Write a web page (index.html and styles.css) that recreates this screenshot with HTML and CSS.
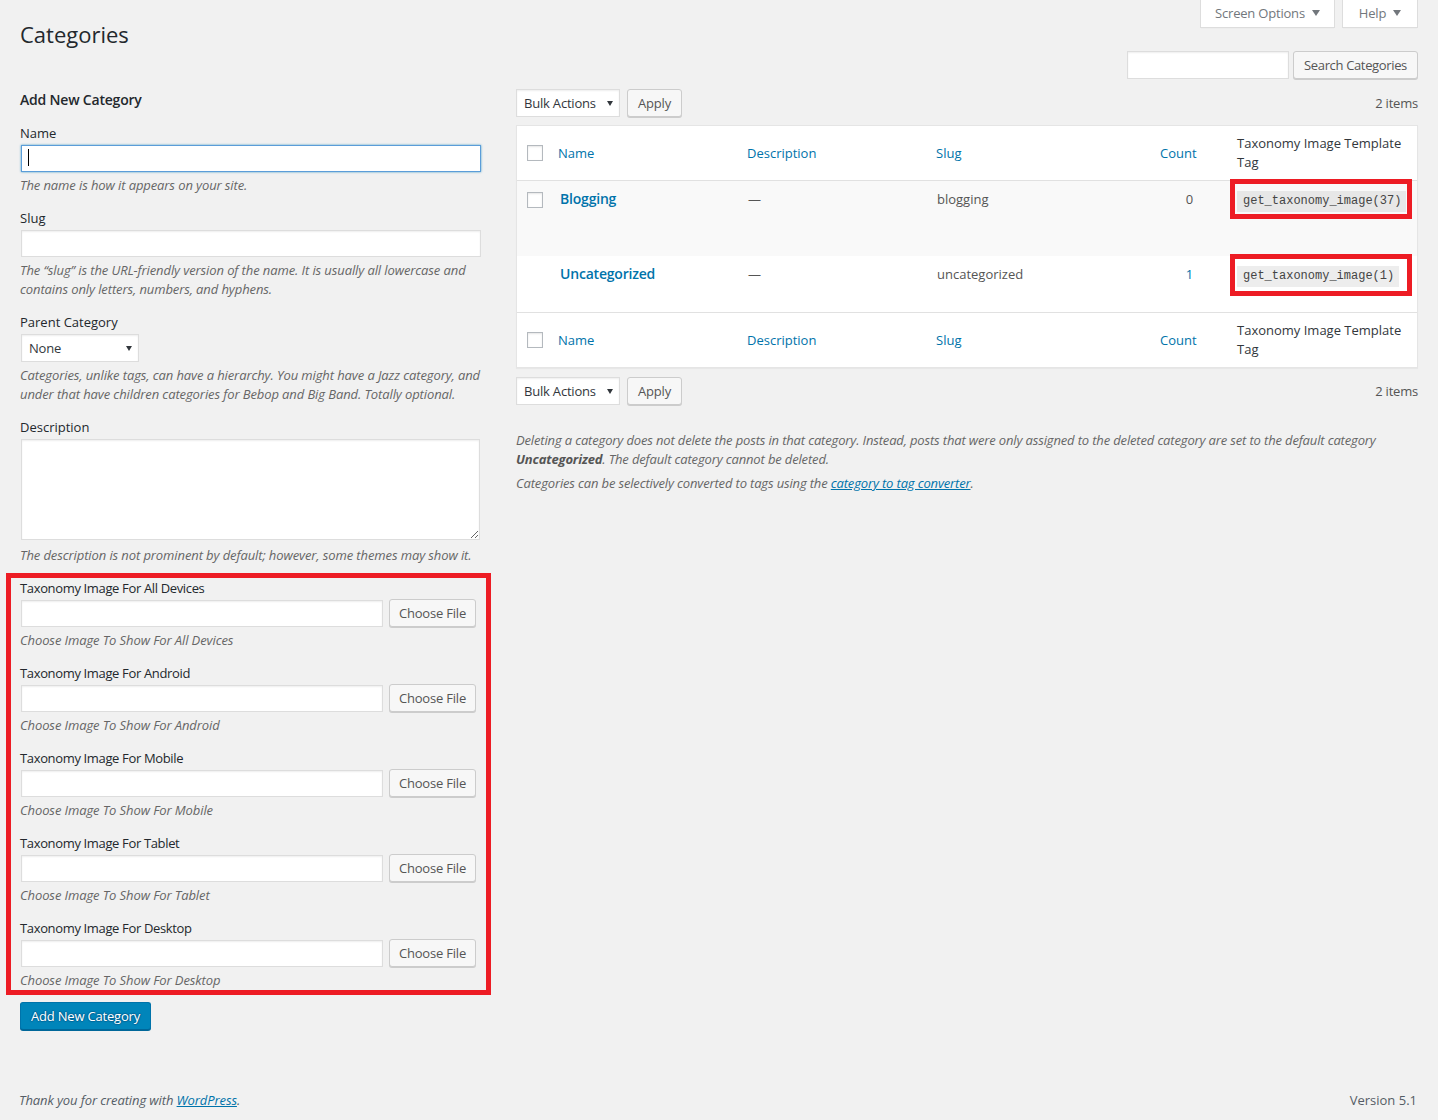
FILE: index.html
```html
<!DOCTYPE html>
<html lang="en">
<head>
<meta charset="utf-8">
<title>Categories</title>
<link rel="stylesheet" href="styles.css">
</head>
<body>
<div class="page">
  <div class="main">
    <div class="screen-meta-links">
      <button class="meta-tab tab-screen">Screen Options <span class="tri-grey"></span></button>
      <button class="meta-tab tab-help">Help <span class="tri-grey"></span></button>
    </div>
    <h1 class="page-title">Categories</h1>
    <div class="search-box">
      <input class="input search-input" type="search">
      <button class="button btn-search">Search Categories</button>
    </div>

    <div class="cols">
      <div class="col-left">
        <h2 class="form-title">Add New Category</h2>

        <div class="form-field">
          <label class="field-label">Name</label>
          <div class="name-wrap"><input class="input text-input focused" type="text"></div>
          <p class="description">The name is how it appears on your site.</p>
        </div>

        <div class="form-field">
          <label class="field-label">Slug</label>
          <input class="input text-input" type="text">
          <p class="description">The “slug” is the URL-friendly version of the name. It is usually all lowercase and contains only letters, numbers, and hyphens.</p>
        </div>

        <div class="form-field">
          <label class="field-label">Parent Category</label>
          <span class="select-wrap sel-parent"><select class="select"><option>None</option></select></span>
          <p class="description">Categories, unlike tags, can have a hierarchy. You might have a Jazz category, and under that have children categories for Bebop and Big Band. Totally optional.</p>
        </div>

        <div class="form-field field-desc">
          <label class="field-label">Description</label>
          <textarea class="input textarea"></textarea>
          <p class="description desc-after-area">The description is not prominent by default; however, some themes may show it.</p>
        </div>

        <div class="tax-box">
          <div class="tax-field">
            <label class="field-label tax-label">Taxonomy Image For All Devices</label>
            <div class="file-row"><input class="input file-input" type="text"><button class="button btn-choose">Choose File</button></div>
            <p class="description">Choose Image To Show For All Devices</p>
          </div>
          <div class="tax-field">
            <label class="field-label tax-label">Taxonomy Image For Android</label>
            <div class="file-row"><input class="input file-input" type="text"><button class="button btn-choose">Choose File</button></div>
            <p class="description">Choose Image To Show For Android</p>
          </div>
          <div class="tax-field">
            <label class="field-label tax-label">Taxonomy Image For Mobile</label>
            <div class="file-row"><input class="input file-input" type="text"><button class="button btn-choose">Choose File</button></div>
            <p class="description">Choose Image To Show For Mobile</p>
          </div>
          <div class="tax-field">
            <label class="field-label tax-label">Taxonomy Image For Tablet</label>
            <div class="file-row"><input class="input file-input" type="text"><button class="button btn-choose">Choose File</button></div>
            <p class="description">Choose Image To Show For Tablet</p>
          </div>
          <div class="tax-field">
            <label class="field-label tax-label">Taxonomy Image For Desktop</label>
            <div class="file-row"><input class="input file-input" type="text"><button class="button btn-choose">Choose File</button></div>
            <p class="description">Choose Image To Show For Desktop</p>
          </div>
        </div>

        <button class="button-primary">Add New Category</button>
      </div>

      <div class="col-right">
        <div class="tablenav tablenav-top">
          <span class="select-wrap sel-bulk"><select class="select"><option>Bulk Actions</option></select></span>
          <button class="button btn-apply">Apply</button>
          <span class="items-count">2 items</span>
        </div>

        <table class="list-table">
          <colgroup>
            <col class="c-cb"><col class="c-name"><col class="c-desc"><col class="c-slug"><col class="c-count"><col class="c-tax">
          </colgroup>
          <thead>
            <tr>
              <td class="check-head"><input class="cb" type="checkbox"></td>
              <th class="sortable">Name</th>
              <th class="sortable">Description</th>
              <th class="sortable">Slug</th>
              <th class="sortable count-head">Count</th>
              <th class="plain-head">Taxonomy Image Template Tag</th>
            </tr>
          </thead>
          <tbody>
            <tr class="alt">
              <td class="check-cell"><input class="cb" type="checkbox"></td>
              <td class="name-cell"><div class="title-block tall"><a class="row-title">Blogging</a></div></td>
              <td class="cell">—</td>
              <td class="cell">blogging</td>
              <td class="cell count-cell">0</td>
              <td class="cell tag-cell"><span class="tag tag-a"><code class="code">get_taxonomy_image(37)</code></span></td>
            </tr>
            <tr>
              <td class="check-cell"></td>
              <td class="name-cell"><div class="title-block"><a class="row-title">Uncategorized</a></div></td>
              <td class="cell">—</td>
              <td class="cell">uncategorized</td>
              <td class="cell count-cell"><a class="count-link">1</a></td>
              <td class="cell tag-cell"><span class="tag tag-b"><code class="code">get_taxonomy_image(1)</code></span></td>
            </tr>
          </tbody>
          <tfoot>
            <tr>
              <td class="check-head"><input class="cb" type="checkbox"></td>
              <th class="sortable">Name</th>
              <th class="sortable">Description</th>
              <th class="sortable">Slug</th>
              <th class="sortable count-head">Count</th>
              <th class="plain-head">Taxonomy Image Template Tag</th>
            </tr>
          </tfoot>
        </table>

        <div class="tablenav tablenav-bottom">
          <span class="select-wrap sel-bulk"><select class="select"><option>Bulk Actions</option></select></span>
          <button class="button btn-apply">Apply</button>
          <span class="items-count">2 items</span>
        </div>

        <div class="notes">
          <p class="note">Deleting a category does not delete the posts in that category. Instead, posts that were only assigned to the deleted category are set to the default category <strong>Uncategorized</strong>. The default category cannot be deleted.</p>
          <p class="note">Categories can be selectively converted to tags using the <a class="link">category to tag converter</a>.</p>
        </div>
      </div>
    </div>
  </div>

  <footer class="footer">
    <p class="footer-left">Thank you for creating with <a class="link">WordPress</a>.</p>
    <p class="footer-right">Version 5.1</p>
  </footer>
</div>
</body>
</html>
```

FILE: styles.css
```css
* { box-sizing: border-box; }

html, body { margin: 0; padding: 0; }

body {
  background: #f1f1f1;
  font-family: "Open Sans", "Noto Sans", sans-serif;
  font-size: 13px;
  line-height: 19px;
  color: #444;
}

.page {
  min-height: 100vh;
  display: flex;
  flex-direction: column;
}

.main {
  flex: 1;
  padding: 0 20px;
}

/* ---------- top tabs ---------- */
.screen-meta-links {
  float: right;
  display: flex;
  gap: 7px;
}

.meta-tab {
  height: 28px;
  margin: 0;
  padding: 0 0 1px;
  background: #fff;
  border: 1px solid #ddd;
  border-top: none;
  box-shadow: 0 1px 1px -1px rgba(0,0,0,.1);
  color: #72777c;
  font: inherit;
  letter-spacing: -0.2px;
  white-space: nowrap;
  display: flex;
  align-items: center;
  justify-content: center;
  gap: 7px;
}

.tab-screen { width: 135px; }
.tab-help { width: 76px; }

.tri-grey {
  flex: none;
  width: 0;
  height: 0;
  border-left: 4px solid transparent;
  border-right: 4px solid transparent;
  border-top: 6px solid #72777c;
}

.page-title {
  margin: 0;
  padding: 19px 0 0;
  font-size: 22px;
  font-weight: 400;
  line-height: 30px;
  color: #23282d;
}

/* ---------- controls ---------- */
.input {
  font: inherit;
  color: #32373c;
  background: #fff;
  border: 1px solid #ddd;
  box-shadow: inset 0 1px 2px rgba(0,0,0,.07);
  padding: 3px 5px;
  margin: 0;
  outline: none;
  border-radius: 0;
}

.button {
  height: 28px;
  margin: 0;
  padding: 0;
  border: 1px solid #ccc;
  border-radius: 3px;
  background: #f7f7f7;
  box-shadow: 0 1px 0 #ccc;
  color: #555;
  font: inherit;
  letter-spacing: -0.2px;
  line-height: 26px;
  text-align: center;
  white-space: nowrap;
}

.search-box {
  display: flex;
  justify-content: flex-end;
  gap: 4px;
  margin-top: 2px;
}

.search-input { width: 162px; height: 28px; }
.btn-search { width: 125px; letter-spacing: -0.35px; }

.select-wrap {
  position: relative;
  display: inline-block;
}

.select-wrap::after {
  content: "";
  position: absolute;
  right: 7px;
  top: 12px;
  width: 0;
  height: 0;
  border-left: 3px solid transparent;
  border-right: 3px solid transparent;
  border-top: 5px solid #32373c;
  pointer-events: none;
}

.select {
  -webkit-appearance: none;
  appearance: none;
  display: block;
  height: 28px;
  margin: 0;
  padding: 0 20px 0 7px;
  font: inherit;
  letter-spacing: -0.2px;
  color: #32373c;
  background: #fff;
  border: 1px solid #ddd;
  box-shadow: inset 0 1px 2px rgba(0,0,0,.07);
  border-radius: 0;
}

.sel-parent { margin-left: 1px; }
.sel-parent .select { width: 118px; }
.sel-bulk .select { width: 104px; padding-left: 7px; }

/* ---------- columns ---------- */
.cols {
  display: grid;
  grid-template-columns: 470px 902px;
  column-gap: 26px;
}

.form-title {
  margin: 11px 0 15px;
  font-size: 14px;
  font-weight: 600;
  line-height: 19px;
  letter-spacing: -0.2px;
  color: #23282d;
}

.form-field { margin-bottom: 14px; }
.field-desc { margin-bottom: 8px; }

.field-label {
  display: block;
  color: #23282d;
  line-height: 19px;
  margin-bottom: 2px;
}

.text-input {
  display: block;
  width: 460px;
  height: 27px;
  margin-left: 1px;
}

.text-input.focused {
  border-color: #5b9dd9;
  box-shadow: 0 0 2px rgba(30,140,190,.8);
}

.name-wrap { position: relative; }

.name-wrap::after {
  content: "";
  position: absolute;
  left: 8px;
  top: 4px;
  width: 1px;
  height: 17px;
  background: #000;
}

.description {
  margin: 4px 0 0;
  font-style: italic;
  color: #666;
  line-height: 19px;
  letter-spacing: -0.1px;
}

.textarea {
  display: block;
  width: 459px;
  height: 101px;
  margin-left: 1px;
  resize: vertical;
}

.desc-after-area { margin-top: 6px; }

/* annotated box */
.tax-box {
  margin-left: -14px;
  width: 485px;
  border: 5px solid #ed1c24;
  padding: 1px 0 0 9px;
}

.tax-field { margin-bottom: 14px; }
.tax-field:last-child { margin-bottom: 0; }

.tax-label { margin-bottom: 1px; letter-spacing: -0.35px; }

.file-row {
  display: flex;
  align-items: flex-start;
  gap: 6px;
}

.file-input {
  width: 362px;
  height: 27px;
  margin: 1px 0 0 1px;
}

.btn-choose { width: 87px; }

.button-primary {
  margin-top: 7px;
  width: 131px;
  height: 28px;
  padding: 0;
  background: #0085ba;
  border: 1px solid #0073aa;
  border-bottom-color: #006799;
  border-radius: 3px;
  box-shadow: 0 1px 0 #006799;
  color: #fff;
  font: inherit;
  letter-spacing: -0.2px;
  line-height: 26px;
  text-shadow: 0 -1px 1px #006799, 1px 0 1px #006799, 0 1px 1px #006799, -1px 0 1px #006799;
  white-space: nowrap;
}

/* ---------- right column ---------- */
.tablenav {
  display: flex;
  align-items: center;
  gap: 7px;
  height: 28px;
}

.tablenav-top { margin-top: 10px; }
.tablenav-bottom { margin-top: 9px; }

.btn-apply { width: 55px; }

.items-count {
  margin-left: auto;
  color: #555;
  letter-spacing: -0.2px;
}

.list-table {
  width: 100%;
  margin-top: 8px;
  table-layout: fixed;
  border-collapse: separate;
  border-spacing: 0;
  background: #fff;
  border: 1px solid #e5e5e5;
  box-shadow: 0 1px 1px rgba(0,0,0,.04);
}

.c-cb { width: 31px; }
.c-name { width: 189px; }
.c-desc { width: 189px; }
.c-slug { width: 226px; }
.c-count { width: 75px; }
.c-tax { width: 190px; }

.list-table th {
  padding: 8px 10px;
  font-weight: 400;
  text-align: left;
  vertical-align: middle;
  line-height: 19px;
  color: #32373c;
}

.list-table thead th,
.list-table thead td { border-bottom: 1px solid #e1e1e1; }

.list-table tfoot th,
.list-table tfoot td { border-top: 1px solid #e1e1e1; }

.sortable { color: #0073aa !important; }
.count-head { padding-left: 8px !important; }

.check-head {
  padding: 0 0 0 10px;
  vertical-align: middle;
}

.cb {
  -webkit-appearance: none;
  appearance: none;
  display: block;
  width: 16px;
  height: 16px;
  margin: 0;
  background: #fff;
  border: 1px solid #b4b9be;
  box-shadow: inset 0 1px 2px rgba(0,0,0,.1);
  border-radius: 0;
}

.list-table tbody tr.alt { background: #f9f9f9; }

.check-cell {
  padding: 11px 0 0 10px;
  vertical-align: top;
}

.name-cell,
.cell {
  padding: 8px 10px;
  vertical-align: top;
  line-height: 20px;
  color: #555;
}

.cell { padding-left: 11px; }

.name-cell { padding-left: 12px; }

.title-block { height: 40px; }
.title-block.tall { height: 59px; }

.row-title {
  font-size: 14px;
  font-weight: 600;
  color: #0073aa;
  line-height: 20px;
  letter-spacing: -0.2px;
}

.count-cell {
  text-align: center;
  padding-left: 0;
  padding-right: 0;
}

.count-link { color: #0073aa; }

.tag-cell { padding-left: 10px; }

.tag {
  position: relative;
  display: inline-block;
  vertical-align: top;
}

.tag::after {
  content: "";
  box-sizing: border-box;
  position: absolute;
  left: -7px;
  top: -10px;
  width: 182px;
  height: 40px;
  border: 5px solid #ed1c24;
}

.tag-b::after { height: 42px; }

.code {
  display: inline-block;
  font-family: "Liberation Mono", "DejaVu Sans Mono", monospace;
  font-size: 12px;
  line-height: 17px;
  padding: 2px 5px 2px 6px;
  background: rgba(0,0,0,.07);
  color: #444;
}

.notes { margin-top: 26px; }

.note {
  margin: 0 0 5px;
  font-style: italic;
  color: #666;
  line-height: 19px;
  letter-spacing: -0.15px;
}

.note strong { font-weight: 700; color: #555; }

.link {
  color: #0073aa;
  text-decoration: underline;
}

/* ---------- footer ---------- */
.footer {
  display: flex;
  justify-content: space-between;
  padding: 0 21px 10px 19px;
  color: #555d66;
}

.footer p { margin: 0; line-height: 20px; }
.footer-left { font-style: italic; letter-spacing: -0.1px; }
```
